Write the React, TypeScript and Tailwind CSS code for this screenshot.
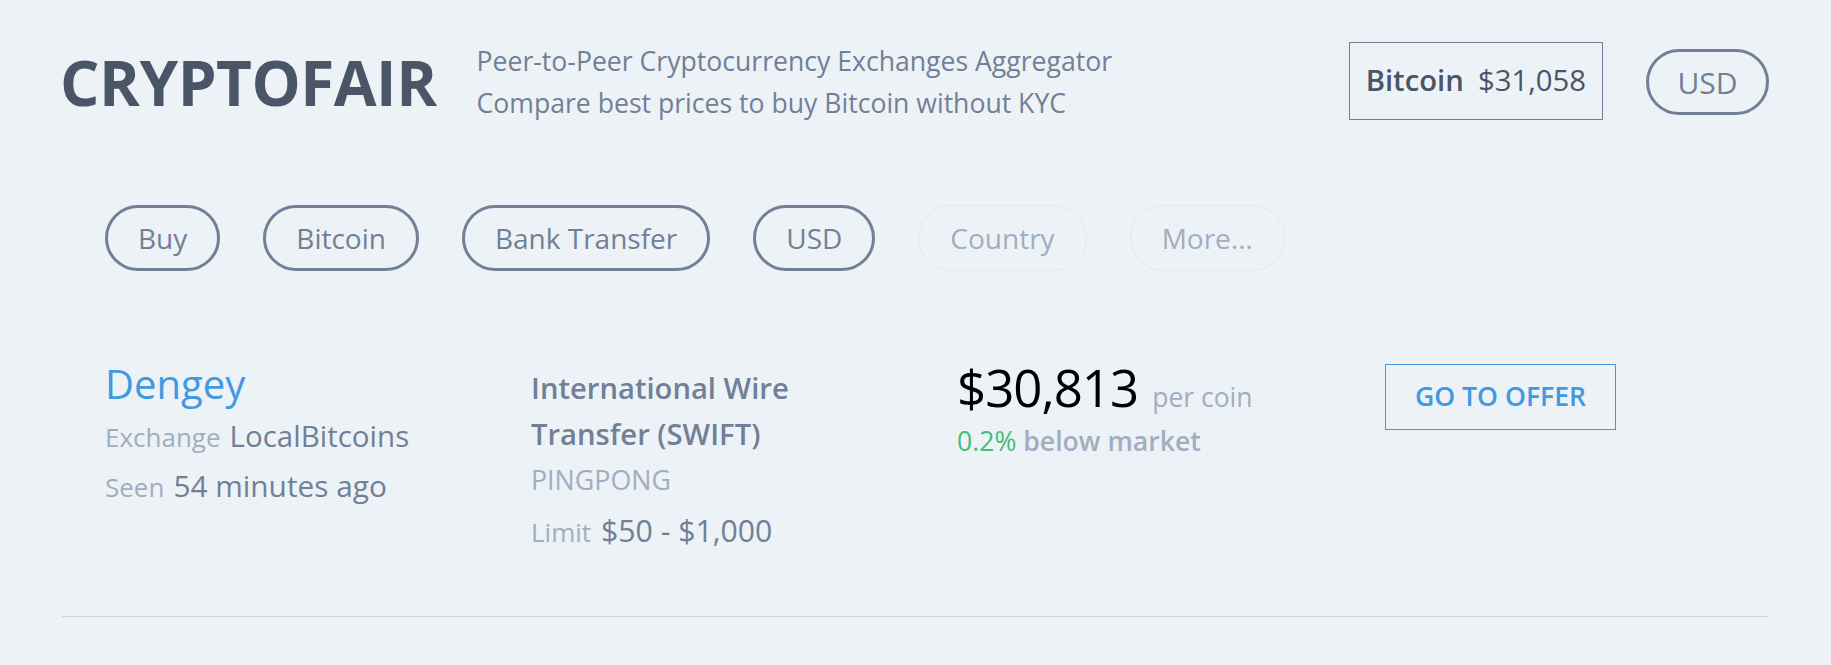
import React from "react";

const font = { fontFamily: '"Open Sans", "Noto Sans", sans-serif' };

function Pill({ children, muted }: { children: React.ReactNode; muted?: boolean }) {
  return (
    <div
      className={
        "h-[66px] flex items-center rounded-full text-[28px] " +
        (muted
          ? "px-[31px] border border-[#e2e8f0] text-[#a0aec0]"
          : "px-[30px] border-[3px] border-[#718096] text-[#718096]")
      }
    >
      {children}
    </div>
  );
}

export default function App() {
  return (
    <div className="min-h-screen w-full bg-[#edf2f7]" style={font}>
      <div className="px-[62px]">
        <header className="h-[164px] flex items-center">
          <h1 className="-ml-[2px] text-[62px] font-bold text-[#4a5568] leading-none tracking-[-0.5px]">CRYPTOFAIR</h1>
          <div className="ml-[40px] text-[26.6px] leading-[42px] text-[#718096]">
            <div>Peer-to-Peer Cryptocurrency Exchanges Aggregator</div>
            <div>Compare best prices to buy Bitcoin without KYC</div>
          </div>
          <div className="ml-auto flex items-center">
            <div className="-mt-[2px] h-[78px] px-[16px] flex items-center border border-[#718096] text-[29.3px] text-[#4a5568]">
              <span className="font-semibold">Bitcoin</span>
              <span className="ml-[14px]">$31,058</span>
            </div>
            <div className="ml-[43px] h-[66px] w-[123px] flex items-center justify-center rounded-full border-[3px] border-[#718096] text-[30px] text-[#718096]">
              USD
            </div>
          </div>
        </header>

        <div className="mt-[41px] pl-[43px] flex gap-[43px]">
          <Pill>Buy</Pill>
          <Pill>Bitcoin</Pill>
          <Pill>Bank Transfer</Pill>
          <Pill>USD</Pill>
          <Pill muted>Country</Pill>
          <Pill muted>More...</Pill>
        </div>

        <div className="mt-[88px] pl-[43px] grid grid-cols-[426px_426px_428px_1fr] pb-[57px] border-b border-[#cbd5e0]">
          <div>
            <div className="text-[40px] leading-[50px] text-[#4299e1]">Dengey</div>
            <div className="mt-[4px] leading-[46px]">
              <span className="text-[26px] text-[#a0aec0]">Exchange</span>
              <span className="ml-[9px] text-[29.5px] text-[#718096]">LocalBitcoins</span>
            </div>
            <div className="leading-[44px]">
              <span className="text-[26px] text-[#a0aec0]">Seen</span>
              <span className="ml-[9px] text-[29.8px] text-[#718096]">54 minutes ago</span>
            </div>
          </div>
          <div>
            <div className="mt-[6px] text-[29.2px] font-semibold leading-[46px] text-[#718096]">
              International Wire
              <br />
              Transfer (SWIFT)
            </div>
            <div className="text-[26.8px] leading-[46px] text-[#a0aec0]">PINGPONG</div>
            <div className="mt-[5px] leading-[46px]">
              <span className="text-[26px] text-[#a0aec0]">Limit</span>
              <span className="ml-[10px] text-[30.2px] text-[#718096]">$50 - $1,000</span>
            </div>
          </div>
          <div>
            <div className="flex items-baseline">
              <span className="text-[51px] leading-[56px] tracking-[-1px] text-black">$30,813</span>
              <span className="ml-[14px] text-[26.5px] text-[#a0aec0]">per coin</span>
            </div>
            <div className="text-[26.6px] leading-[46px] font-semibold">
              <span className="text-[#48bb78] font-normal">0.2%</span>{" "}
              <span className="text-[#a0aec0]">below market</span>
            </div>
          </div>
          <div>
            <button className="mt-[5px] h-[66px] w-[231px] border border-[#4299e1] text-[26.6px] font-semibold text-[#4299e1]">
              GO TO OFFER
            </button>
          </div>
        </div>
      </div>
    </div>
  );
}
